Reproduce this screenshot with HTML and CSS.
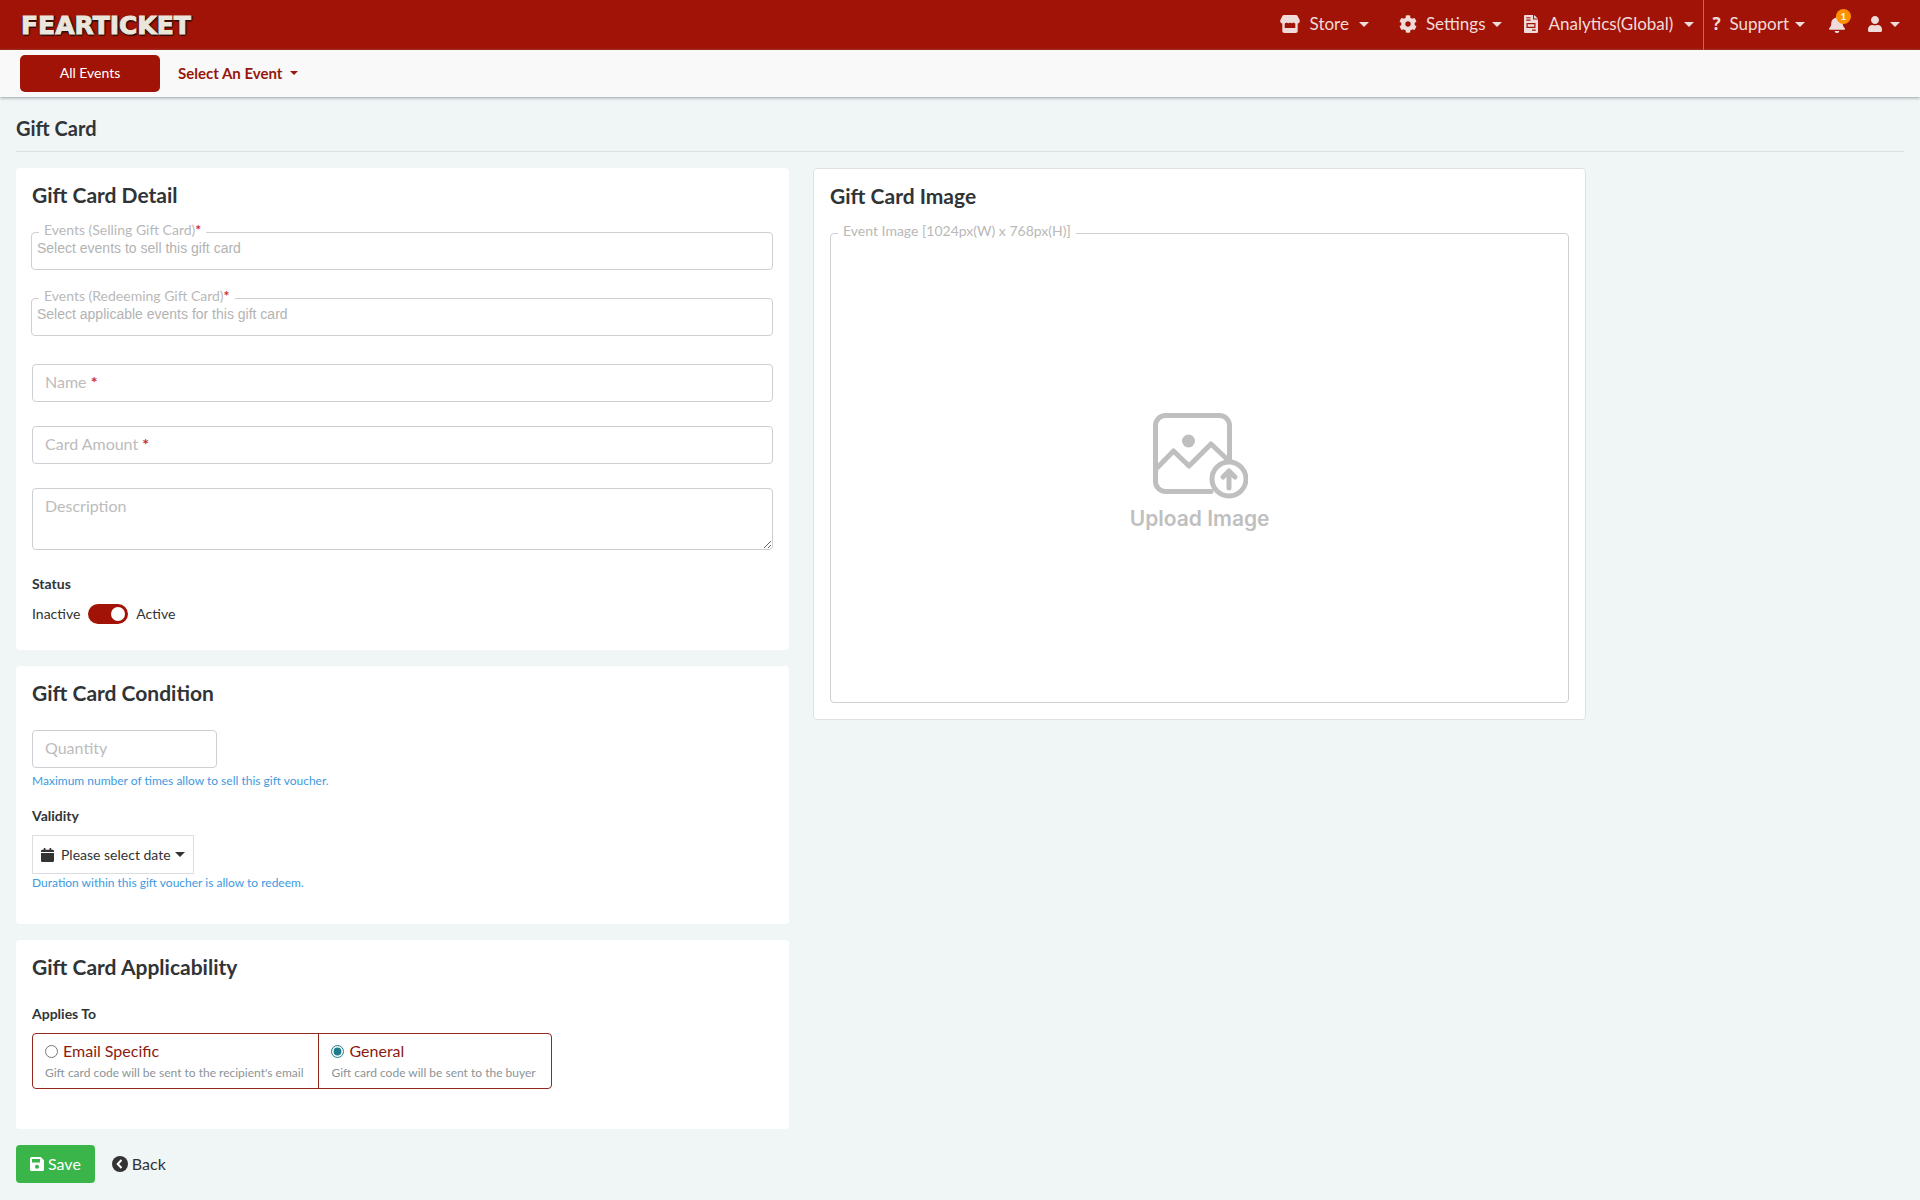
FILE: index.html
```html
<!DOCTYPE html>
<html lang="en">
<head>
<meta charset="utf-8">
<meta name="viewport" content="width=device-width, initial-scale=1">
<title>Gift Card</title>
<link rel="stylesheet" href="styles.css">
</head>
<body>
<header class="topbar">
  <a class="logo" href="#">FEARTICKET</a>
  <nav class="menu">
    <button class="menu-item store" type="button">
      <svg width="20" height="18" viewBox="0 0 20 18"><path fill="currentColor" fill-rule="evenodd" d="M4 0h12c.8 0 1.300.3 1.600.9L19.500 4.800c.8 1.700-.2 3.500-1.800 3.700V16c0 1.200-.8 2-2 2H4.300c-1.200 0-2-.8-2-2V8.500C.7 8.300-.3 6.500.5 4.800L2.400.9C2.700.3 3.200 0 4 0ZM4.700 8.500V13h10.600V8.500c-.8-.1-1.400-.4-2-.9-1 1-2.400 1-3.300 0-1 1-2.400 1-3.300 0-.6.5-1.200.8-2 .9Z"/></svg>
      <span>Store</span><i class="caret"></i>
    </button>
    <button class="menu-item settings" type="button">
      <svg width="18" height="18" viewBox="0 0 512 512"><path fill="currentColor" d="M487.400 315.700l-42.600-24.600c4.300-23.200 4.300-47 0-70.200l42.600-24.600c4.900-2.800 7.100-8.600 5.500-14-11.100-35.600-30-67.800-54.700-94.600-3.800-4.100-10-5.100-14.800-2.300L380.800 110c-17.900-15.400-38.500-27.300-60.800-35.100V25.800c0-5.600-3.900-10.500-9.400-11.700-36.700-8.200-74.300-7.800-109.200 0-5.500 1.200-9.400 6.100-9.400 11.700V75c-22.200 7.900-42.800 19.800-60.800 35.100L88.700 85.500c-4.900-2.800-11-1.900-14.800 2.300-24.700 26.700-43.600 58.900-54.700 94.600-1.700 5.400.6 11.200 5.500 14L67.300 221c-4.300 23.200-4.300 47 0 70.200l-42.600 24.600c-4.900 2.800-7.100 8.600-5.500 14 11.100 35.600 30 67.800 54.700 94.600 3.800 4.100 10 5.100 14.800 2.300l42.600-24.600c17.900 15.400 38.500 27.300 60.800 35.100v49.200c0 5.600 3.900 10.500 9.400 11.700 36.700 8.200 74.300 7.800 109.200 0 5.500-1.200 9.400-6.100 9.400-11.700v-49.200c22.200-7.900 42.800-19.800 60.800-35.100l42.600 24.600c4.900 2.800 11 1.900 14.800-2.300 24.700-26.700 43.600-58.900 54.700-94.600 1.500-5.500-.7-11.300-5.600-14.100zM256 336c-44.100 0-80-35.900-80-80s35.900-80 80-80 80 35.900 80 80-35.900 80-80 80z"/></svg>
      <span>Settings</span><i class="caret"></i>
    </button>
    <button class="menu-item analytics" type="button">
      <svg width="14" height="18" viewBox="0 0 14 18"><path fill="currentColor" fill-rule="evenodd" d="M1 0h8v4.500h5V17a1 1 0 0 1-1 1H1a1 1 0 0 1-1-1V1a1 1 0 0 1 1-1Zm9 0 4 3.600h-4ZM2.200 2.200v1.100h4.300V2.200Zm0 2.400v1.100h4.300V4.600ZM2.500 8v5h9V8Zm1.200 1.300h6.600v2.500H3.700ZM8 14.600v1.100h3.800v-1.100Z"/></svg>
      <span>Analytics(Global)</span><i class="caret"></i>
    </button>
    <button class="menu-item support" type="button">
      <b class="question">?</b>
      <span>Support</span><i class="caret"></i>
    </button>
    <button class="bell" type="button" aria-label="Notifications">
      <svg width="16" height="17" viewBox="0 0 448 512" preserveAspectRatio="none"><path fill="currentColor" d="M224 512c35.320 0 63.970-28.650 63.970-64H160.030c0 35.350 28.650 64 63.970 64zm215.390-149.710c-19.320-20.760-55.470-51.990-55.470-154.290 0-77.700-54.480-139.900-127.940-155.160V32c0-17.670-14.320-32-31.980-32s-31.980 14.330-31.980 32v20.840C118.560 68.100 64.080 130.300 64.080 208c0 102.300-36.150 133.530-55.470 154.290-6 6.450-8.660 14.160-8.610 21.710.11 16.400 12.980 32 32.100 32h383.800c19.120 0 32-15.600 32.100-32 .05-7.550-2.610-15.270-8.610-21.710z"/></svg>
      <span class="badge">1</span>
    </button>
    <button class="menu-item user" type="button" aria-label="Account">
      <svg width="14" height="16" viewBox="0 0 448 512"><path fill="currentColor" d="M224 256c70.700 0 128-57.300 128-128S294.700 0 224 0 96 57.300 96 128s57.300 128 128 128zm89.600 32h-16.700c-22.200 10.200-46.900 16-72.900 16s-50.600-5.800-72.900-16h-16.700C60.200 288 0 348.200 0 422.400V464c0 26.500 21.500 48 48 48h352c26.500 0 48-21.500 48-48v-41.600c0-74.200-60.200-134.400-134.400-134.400z"/></svg>
      <i class="caret"></i>
    </button>
  </nav>
</header>
<nav class="eventbar">
  <button class="all-events" type="button">All Events</button>
  <button class="select-event" type="button">Select An Event <i class="caret"></i></button>
</nav>
<main class="page">
  <h1 class="page-title">Gift Card</h1>
  <form>
    <div class="columns">
      <div class="column">
        <section class="card detail">
          <h2>Gift Card Detail</h2>
          <fieldset class="picker">
            <legend>Events (Selling Gift Card)<span class="req">*</span></legend>
            <input type="text" aria-label="Events (Selling Gift Card)" placeholder="Select events to sell this gift card">
          </fieldset>
          <fieldset class="picker">
            <legend>Events (Redeeming Gift Card)<span class="req">*</span></legend>
            <input type="text" aria-label="Events (Redeeming Gift Card)" placeholder="Select applicable events for this gift card">
          </fieldset>
          <div class="field">
            <input id="name" type="text"><label for="name">Name <span class="req">*</span></label>
          </div>
          <div class="field">
            <input id="amount" type="text"><label for="amount">Card Amount <span class="req">*</span></label>
          </div>
          <div class="field">
            <textarea id="description"></textarea><label for="description">Description</label>
          </div>
          <h3>Status</h3>
          <label class="toggle"><span>Inactive</span><input type="checkbox" role="switch" checked><span>Active</span></label>
        </section>
        <section class="card condition">
          <h2>Gift Card Condition</h2>
          <div class="field quantity">
            <input id="quantity" type="text"><label for="quantity">Quantity</label>
          </div>
          <p class="hint">Maximum number of times allow to sell this gift voucher.</p>
          <h3>Validity</h3>
          <button class="date" type="button">
            <svg width="13" height="14" viewBox="0 0 13 14"><path fill="currentColor" d="M1.200 1.700h1.500V.5a.5.500 0 0 1 .5-.5h.8a.5.500 0 0 1 .5.500v1.200h4V.5A.5.500 0 0 1 9 0h.8a.5.500 0 0 1 .5.500v1.200h1.500A1.200 1.200 0 0 1 13 2.900v1.200H0V2.900a1.200 1.200 0 0 1 1.200-1.200ZM0 5h13v7.700a1.300 1.300 0 0 1-1.300 1.300H1.300A1.300 1.300 0 0 1 0 12.700Z"/></svg>
            <span>Please select date</span><i class="caret"></i>
          </button>
          <p class="hint">Duration within this gift voucher is allow to redeem.</p>
        </section>
        <section class="card applicability">
          <h2>Gift Card Applicability</h2>
          <h3>Applies To</h3>
          <div class="choices">
            <label class="choice"><span class="choice-name"><input type="radio" name="applies">Email Specific</span><small>Gift card code will be sent to the recipient's email</small></label>
            <label class="choice"><span class="choice-name"><input type="radio" name="applies" checked>General</span><small>Gift card code will be sent to the buyer</small></label>
          </div>
        </section>
      </div>
      <section class="card image-card">
        <h2>Gift Card Image</h2>
        <fieldset class="dropzone">
          <legend>Event Image [1024px(W) x 768px(H)]</legend>
          <button class="upload" type="button">
            <svg width="96" height="86" viewBox="0 0 96 86" fill="none" stroke="currentColor" stroke-width="5" stroke-linecap="round" stroke-linejoin="round"><path d="M59 78.500H13.500a10 10 0 0 1-10-10v-56a10 10 0 0 1 10-10h54a10 10 0 0 1 10 10V46M4 56l17.500-18L37 53l22-22 18 17"/><circle cx="36.500" cy="28" r="6.500" fill="currentColor" stroke="none"/><circle cx="77" cy="66" r="17"/><path d="M77 75V59M71 64l6-6 6 6"/></svg>
            <span>Upload Image</span>
          </button>
        </fieldset>
      </section>
    </div>
    <div class="actions">
      <button class="save" type="submit">
        <svg width="14" height="14" viewBox="0 0 14 14"><path fill="currentColor" fill-rule="evenodd" d="M1.500 0h9.300L14 3.200v9.300a1.500 1.500 0 0 1-1.500 1.500h-11A1.500 1.500 0 0 1 0 12.500v-11A1.500 1.500 0 0 1 1.500 0ZM2 2v3.500h8V2Zm5 5.800a2 2 0 1 0 0 4 2 2 0 0 0 0-4Z"/></svg>
        <span>Save</span>
      </button>
      <a class="back" href="#">
        <svg width="16" height="16" viewBox="0 0 16 16"><circle cx="8" cy="8" r="8" fill="currentColor"/><path d="M9.500 4 5.700 8l3.800 4" fill="none" stroke="#fff" stroke-width="2"/></svg>
        <span>Back</span>
      </a>
    </div>
  </form>
</main>
</body>
</html>
```
FILE: styles.css
```css
* { box-sizing: border-box; }
body {
  margin: 0;
  background: #f0f6f6;
  color: #333;
  font: 14px/20px Lato, "Noto Sans", sans-serif;
}
button, input, textarea { font: inherit; color: inherit; }
button { border: 0; padding: 0; background: none; cursor: pointer; }
svg { display: block; flex: none; }
h1, h2, h3, p, fieldset { margin: 0; }
.caret {
  flex: none;
  border: 5px solid transparent;
  border-top-color: currentColor;
  border-bottom-width: 0;
}
.req { color: #c9302c; font-weight: 700; }

.topbar {
  display: flex;
  align-items: center;
  justify-content: space-between;
  height: 50px;
  padding: 0 20px 2px 21px;
  background: #a11306;
}
.logo {
  padding-top: 4px;
  color: #eae6dc;
  font: 700 25px/28px "DejaVu Sans", sans-serif;
  text-decoration: none;
  -webkit-text-stroke: 1px #eae6dc;
  text-shadow: 1px 2px 1px #2a0f0a, -1px 1px 1px #2a0f0a, 2px 0 1px #2a0f0a;
}
.menu {
  display: flex;
  align-items: center;
  height: 50px;
  margin-bottom: -2px;
  padding-bottom: 2px;
  color: #efdcda;
  font-size: 17px;
}
.menu-item { display: flex; align-items: center; gap: 8px; height: 48px; }
.store { gap: 10px; }
.settings { margin-left: 30px; }
.settings, .support { gap: 6px; }
.settings svg, .support .question { margin-right: 3px; }
.analytics { gap: 11px; height: 50px; margin: 0 0 -2px 22px; padding: 0 9px 2px 0; border-right: 1px solid #c9655c; }
.support { padding-left: 8px; }
.question { font: 700 17px/20px "Noto Sans", sans-serif; }
.bell { position: relative; margin: 0 23px 0 24px; }
.badge {
  position: absolute;
  top: -7px;
  left: 7px;
  width: 15px;
  border-radius: 8px;
  background: #ff9000;
  color: #fff;
  font-size: 10px;
  font-weight: 700;
  line-height: 15px;
  text-align: center;
}

.eventbar {
  display: flex;
  align-items: center;
  gap: 18px;
  height: 47px;
  padding: 0 20px;
  background: #f9f9f9;
  box-shadow: 0 1px 3px #9aa0a6;
}
.all-events {
  width: 140px;
  height: 37px;
  padding-bottom: 2px;
  border-radius: 5px;
  background: #a11306;
  color: #fff;
}
.select-event {
  display: flex;
  align-items: center;
  gap: 8px;
  padding-bottom: 2px;
  color: #97170c;
  font-size: 15px;
  font-weight: 700;
}
.select-event .caret { border-width: 4px 4px 0; }

.page { padding: 16px; }
.page-title, .card h2 { color: #303436; font-size: 21px; font-weight: 700; line-height: 24px; }
.page-title { margin-bottom: 16px; padding: 3px 0 11px; border-bottom: 1px solid #d9dfe2; font-size: 20px; }
.columns { display: flex; align-items: flex-start; gap: 24px; }
.column, .image-card { width: calc(41% - 1px); }
.column { display: flex; flex-direction: column; gap: 16px; }
.card { padding: 15px 16px; border-radius: 4px; background: #fff; }
.card h3 { color: #303436; font-size: 14px; font-weight: 700; line-height: 20px; }

.picker {
  height: 48px;
  min-width: 0;
  margin: 0 0 18px -1px;
  padding: 0 5px;
  border: 1px solid #cfcfd4;
  border-radius: 4px;
}
.detail h2 { margin-bottom: 15px; }
.picker legend, .dropzone legend {
  margin-left: 2px;
  padding: 0 5px 4px;
  color: #b9b9b9;
  line-height: 16px;
}
.picker input {
  display: block;
  width: 100%;
  height: 20px;
  margin-top: -4px;
  padding: 0;
  border: 0;
  outline: 0;
  background: none;
  font: 14px/16px "Liberation Sans", Arial, sans-serif;
}
.picker input::placeholder { color: #b3b3b3; opacity: 1; }
.picker + .field { margin-top: 28px; }
.field { position: relative; margin-bottom: 24px; }
.field input, .field textarea {
  display: block;
  width: 100%;
  height: 38px;
  padding: 6px 12px;
  border: 1px solid #cccfd4;
  border-radius: 4px;
  background: #fff;
}
.field textarea { height: 62px; resize: vertical; }
.field label {
  position: absolute;
  top: 8px;
  left: 13px;
  color: #bcbcbc;
  font-size: 16px;
  pointer-events: none;
}
.toggle { display: inline-flex; align-items: center; gap: 8px; margin-top: 10px; }
.toggle input {
  appearance: none;
  display: flex;
  align-items: center;
  justify-content: flex-end;
  width: 40px;
  height: 20px;
  margin: 0;
  padding: 3px;
  border-radius: 10px;
  background: #a11306;
}
.toggle input::before { content: ""; width: 14px; height: 14px; border-radius: 7px; background: #fff; }
.detail { padding-bottom: 26px; }

.condition h2 { margin-bottom: 25px; }
.quantity { width: 185px; margin-bottom: 4px; }
.hint { color: #3d9adf; font-size: 12px; line-height: 18px; }
.condition h3 { margin: 16px 0 9px; }
.date {
  display: flex;
  align-items: center;
  gap: 4px;
  height: 39px;
  padding: 0 8px;
  border: 1px solid #dcdddf;
}
.date span { margin-left: 3px; }
.condition { padding-bottom: 32px; }

.applicability h2 { margin-bottom: 25px; }
.applicability { padding-bottom: 40px; }
.choices {
  display: inline-flex;
  margin-top: 9px;
  border: 1px solid #93261d;
  border-radius: 4px;
}
.choice { display: block; height: 54px; padding: 7px 15px 7px 12px; }
.choice + .choice { border-left: 1px solid #93261d; }
.choice-name { display: flex; align-items: center; gap: 5px; color: #8b1a10; font-size: 16px; }
.choice input { width: 13px; height: 13px; margin: 0; accent-color: #1c7c8c; }
.choice small { display: block; color: #8b9499; font-size: 12px; line-height: 24px; }

.image-card { border: 1px solid #dde1e3; padding-bottom: 16px; }
.image-card h2 { margin-bottom: 15px; }
.dropzone {
  display: flex;
  height: 480px;
  min-width: 0;
  padding: 0;
  border: 1px solid #cfcfd4;
  border-radius: 4px;
}
.dropzone legend { margin-left: 7px; }
.upload {
  display: flex;
  flex-direction: column;
  align-items: center;
  gap: 6px;
  margin: auto;
  color: #bfbfbf;
  font: 600 21px/28px Inter, sans-serif;
}

.actions { display: flex; align-items: center; gap: 17px; margin-top: 16px; font-size: 16px; }
.save, .back { display: flex; align-items: center; gap: 4px; }
.save { height: 38px; padding: 0 14px; border-radius: 4px; background: #39b54a; color: #fff; }
.back { color: #333; text-decoration: none; }
```
